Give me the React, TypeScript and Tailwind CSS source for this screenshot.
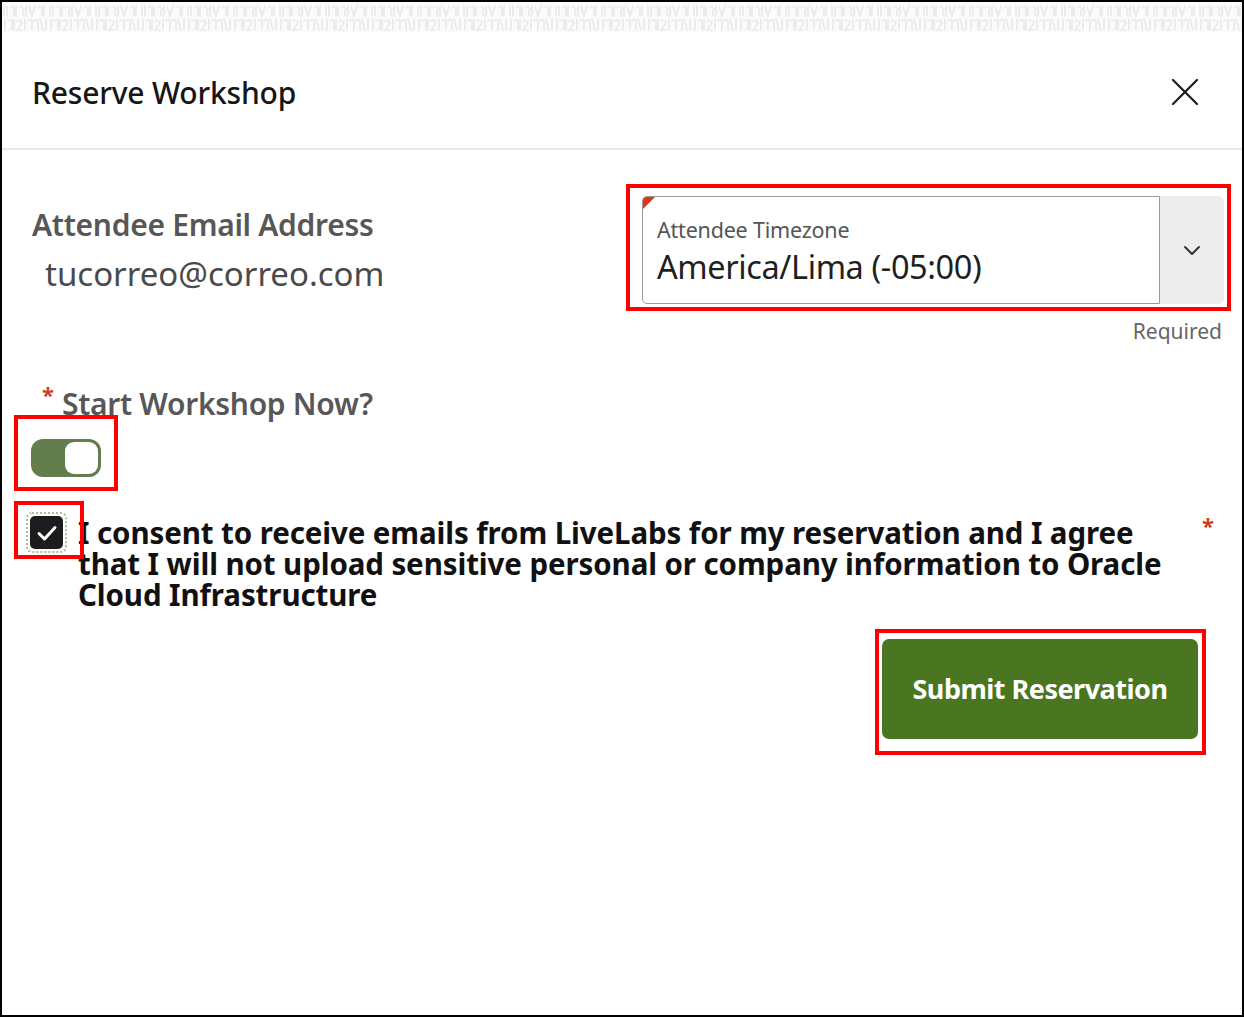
import React from "react";

function TopPattern() {
  return (
    <svg width="1240" height="30" className="block">
      <defs>
        <pattern id="pt" x="0" y="0" width="46" height="30" patternUnits="userSpaceOnUse">
          <g stroke="#e9e9e9" strokeWidth="1.6" fill="none" strokeLinecap="round">
            <path d="M2 4 v10 M5 4 v10 M8 6 q2 -3 4 0 v8 M14 4 v10 M17 6 q3 -3 5 1 q-3 4 0 7 M24 4 v10 M27 4 l3 10 l3 -10 M36 6 q2 -3 4 0 v8 M42 4 v10" />
            <path d="M3 17 v11 M6 19 q2 -3 4 0 v9 M12 17 v11 M15 19 q3 -2 5 2 l-5 7 h5 M23 17 v11 M26 19 q2 -3 4 0 v9 M32 19 q2 -3 4 0 v9 M38 17 l3 11 M44 17 v11" />
          </g>
        </pattern>
      </defs>
      <rect width="1240" height="30" fill="#fbfbfb" />
      <rect width="1240" height="30" fill="url(#pt)" />
    </svg>
  );
}

export default function App() {
  return (
    <div
      className="w-[1244px] h-[1017px] border-2 border-black bg-white overflow-hidden flex flex-col"
      style={{ fontFamily: '"Noto Sans", "Open Sans", sans-serif' }}
    >
      <TopPattern />

      {/* header */}
      <div className="h-[118px] flex items-center justify-between pl-[30px] pr-[41px] border-b-2 border-[#e8e8e8]">
        <h1 className="text-[30px] font-medium text-[#161616] tracking-[-0.2px] pt-[4px]">
          Reserve Workshop
        </h1>
        <svg width="28" height="28" viewBox="0 0 28 28" className="mt-[4px] mr-[2px]">
          <path d="M2 2 L26 26 M26 2 L2 26" stroke="#1a1a1a" strokeWidth="2.2" strokeLinecap="round" />
        </svg>
      </div>

      {/* body */}
      <div className="flex flex-col pl-[30px] pr-[18px]">
        <div className="flex justify-between mt-[46px]">
          <div className="flex flex-col pt-[11px]">
            <div className="text-[30px] font-semibold text-[#575757] leading-[36px] tracking-[-0.3px]">
              Attendee Email Address
            </div>
            <div className="text-[33px] text-[#4a4a4a] leading-[42px] ml-[13px] mt-[10px]">
              tucorreo@correo.com
            </div>
          </div>

          <div className="flex flex-col items-end">
            <div className="relative">
              <div className="absolute -left-[16px] -top-[12px] -right-[7px] -bottom-[7px] border-4 border-[#ff0000] pointer-events-none" />
              <div className="flex w-[582px] h-[108px]">
                <div className="relative flex-1 border border-[#9a9a9a] rounded-l-[5px] bg-white flex flex-col pl-[14px] pt-[20px] overflow-hidden">
                  <div
                    className="absolute left-0 top-0 w-[12px] h-[12px] bg-[#d8361d]"
                    style={{ clipPath: "polygon(0 0, 100% 0, 0 100%)" }}
                  />
                  <div className="text-[21.5px] text-[#555] leading-[26px] tracking-[-0.2px]">Attendee Timezone</div>
                  <div className="text-[32.5px] text-[#1f1f1f] leading-[42px] mt-[3px] tracking-[-0.4px]">
                    America/Lima (-05:00)
                  </div>
                </div>
                <div className="w-[64px] bg-[#ececec] rounded-r-[6px] flex items-center justify-center">
                  <svg width="18" height="12" viewBox="0 0 18 12">
                    <path d="M2 3 L9 10 L16 3" stroke="#333" strokeWidth="2" fill="none" strokeLinecap="round" strokeLinejoin="round" />
                  </svg>
                </div>
              </div>
            </div>
            <div className="text-[21px] text-[#666] mt-[13px] mr-[2px] leading-[28px]">Required</div>
          </div>
        </div>

        {/* Start workshop now */}
        <div className="flex items-start mt-[40px] ml-[10px]">
          <span className="text-[#d13b1f] text-[22px] leading-[18px] font-bold">*</span>
          <span className="text-[30px] font-semibold text-[#575757] leading-[38px] tracking-[-0.3px] ml-[8px]">
            Start Workshop Now?
          </span>
        </div>

        <div className="mt-[16px] -ml-[1px] relative w-[70px] h-[38px]">
          <div className="absolute -left-[17px] -top-[24px] -right-[17px] -bottom-[14px] border-4 border-[#ff0000] pointer-events-none" />
          <div className="w-[70px] h-[38px] rounded-[12px] bg-[#637e4c] p-[3px] flex justify-end">
            <div className="w-[33px] h-[32px] rounded-[9px] bg-white" />
          </div>
        </div>

        {/* consent */}
        <div className="flex items-start mt-[39px] -ml-[2px]">
          <div className="relative w-[33px] h-[33px] shrink-0">
            <div className="absolute -inset-[4px] border-2 border-dotted border-[#a9bd98] rounded-[6px]" />
            <div className="w-[33px] h-[33px] bg-[#1c1c1c] rounded-[5px] flex items-center justify-center">
              <svg width="22" height="18" viewBox="0 0 22 18">
                <path d="M3 9.5 L8.5 15 L19 3.5" stroke="white" strokeWidth="3" fill="none" strokeLinecap="round" strokeLinejoin="round" />
              </svg>
            </div>
            <div className="absolute -left-[16px] -top-[15px] -right-[21px] -bottom-[10px] border-4 border-[#ff0000] pointer-events-none z-10" />
          </div>
          <div className="ml-[15px] mt-[1px] text-[29.5px] font-bold text-[#111] leading-[31px] tracking-[-0.1px] whitespace-nowrap">
            <span className="block">I consent to receive emails from LiveLabs for my reservation and I agree</span>
            <span className="block">that I will not upload sensitive personal or company information to Oracle</span>
            <span className="block">Cloud Infrastructure</span>
          </div>
          <span className="ml-auto mr-[10px] text-[#d13b1f] text-[22px] leading-[18px] font-bold">*</span>
        </div>

        {/* submit */}
        <div className="flex justify-end mt-[29px] mr-[26px]">
          <div className="relative">
            <div className="absolute -left-[7px] -top-[10px] -right-[8px] -bottom-[16px] border-4 border-[#ff0000] pointer-events-none" />
            <button className="w-[316px] h-[100px] rounded-[7px] bg-[#4a7622] text-white text-[27px] font-bold tracking-[-0.5px]">
              Submit Reservation
            </button>
          </div>
        </div>
      </div>
    </div>
  );
}
